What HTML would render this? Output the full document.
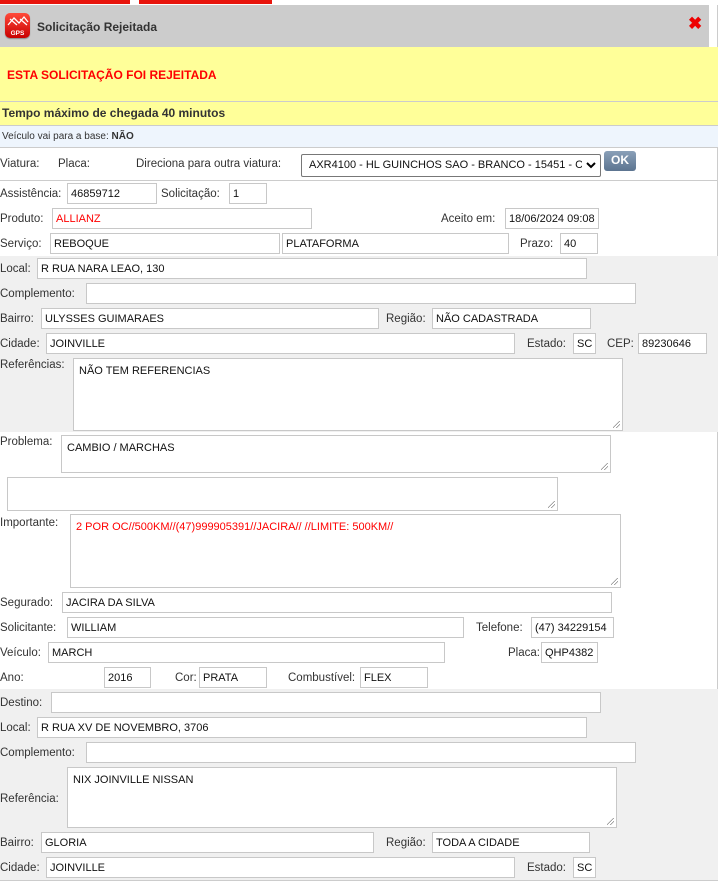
<!DOCTYPE html>
<html><head><meta charset="utf-8"><style>
*{box-sizing:border-box;margin:0;padding:0}
body{width:720px;height:891px;background:#fff;position:relative;overflow:hidden;font-family:"Liberation Sans",Arial,sans-serif;font-size:11.5px;color:#333}
.a{position:absolute}
.l{position:absolute;white-space:nowrap;line-height:14px;color:#333}
.i{position:absolute;height:21px;border:1px solid #c8c8c8;background:#fff;font-size:11px;line-height:20px;padding-left:3px;color:#111;white-space:nowrap;overflow:hidden}
.t{position:absolute;border:1px solid #c8c8c8;background:#fff;font-size:11px;padding:6px 0 0 5px;color:#111}
.t:after{content:"";position:absolute;right:2px;bottom:2px;width:7px;height:7px;background:linear-gradient(135deg,transparent 45%,#888 46%,#888 52%,transparent 53%,transparent 70%,#888 71%,#888 77%,transparent 78%)}
.g{position:absolute;left:0;width:718px;background:#f0f0f0}
</style></head><body>
<div class="a" style="left:0;top:0;width:130px;height:4px;background:#e8140c"></div>
<div class="a" style="left:139px;top:0;width:133px;height:4px;background:#e8140c"></div>
<div class="a" style="left:0;top:5px;width:718px;height:876px;border-right:1px solid #ccc;border-bottom:1px solid #ccc"></div>
<div class="a" style="left:0;top:5px;width:709px;height:42px;background:#ccc"></div>
<div class="a" style="left:5px;top:13px;width:25px;height:25px;border-radius:5px;background:linear-gradient(#ff4a3a,#c80000);box-shadow:0 1px 1px #888">
<svg width="25" height="25" viewBox="0 0 25 25"><path d="M3 12 L9 5 L14 10 L19 4 L23 9 M5 6 L12 12 M15 6 L22 12" stroke="#fff" stroke-width="1.3" fill="none"/><text x="12.5" y="22" font-size="6.5" fill="#fff" text-anchor="middle" font-family="Liberation Sans" font-weight="bold">GPS</text></svg></div>
<div class="l" style="left:37px;top:20px;font-weight:bold;font-size:12px;color:#333">Solicitação Rejeitada</div>
<div class="l" style="left:688px;top:17px;font-weight:bold;font-size:17px;color:#e00">✖</div>
<div class="a" style="left:0;top:47px;width:718px;height:55px;background:#ffff99;border-bottom:1px solid #ccc"></div>
<div class="l" style="left:7px;top:68px;font-weight:bold;font-size:12px;color:#f00">ESTA SOLICITAÇÃO FOI REJEITADA</div>
<div class="a" style="left:0;top:102px;width:718px;height:24px;background:#ffff99;border-bottom:1px solid #ccc"></div>
<div class="l" style="left:2px;top:106px;font-weight:bold;font-size:12px;color:#333">Tempo máximo de chegada 40 minutos</div>
<div class="a" style="left:0;top:126px;width:718px;height:22px;background:#eef5fd;border-bottom:1px solid #ccc"></div>
<div class="l" style="left:2px;top:130px;font-size:10px">Veículo vai para a base: <b>NÃO</b></div>
<div class="l" style="left:0;top:157px">Viatura:</div>
<div class="l" style="left:58px;top:157px">Placa:</div>
<div class="l" style="left:136px;top:157px">Direciona para outra viatura:</div>
<div class="a" style="left:301px;top:154px;width:300px;height:23px;border:1px solid #777;border-radius:2px;background:#fff"></div>
<div class="l" style="left:309px;top:158px;width:273px;overflow:hidden;font-size:11px;color:#111">AXR4100 - HL GUINCHOS SAO - BRANCO - 15451 - CAM</div>
<svg class="a" style="left:586px;top:161px" width="10" height="8" viewBox="0 0 10 8"><path d="M1 2 L5 6 L9 2" stroke="#000" stroke-width="2" fill="none"/></svg>
<div class="a" style="left:604px;top:151px;width:32px;height:20px;border-radius:3px;background:linear-gradient(#8aa0b8,#5c7490);color:#fff;font-weight:bold;font-size:12px;text-align:center;line-height:19px">OK</div>
<div class="a" style="left:0;top:180px;width:718px;height:1px;background:#ccc"></div>

<div class="l" style="left:0;top:187px">Assistência:</div><div class="i" style="left:67px;top:183px;width:90px">46859712</div>
<div class="l" style="left:161px;top:187px">Solicitação:</div><div class="i" style="left:229px;top:183px;width:38px">1</div>
<div class="l" style="left:0;top:212px">Produto:</div><div class="i" style="left:52px;top:208px;width:260px;color:#f00">ALLIANZ</div>
<div class="l" style="left:441px;top:212px">Aceito em:</div><div class="i" style="left:505px;top:208px;width:94px">18/06/2024 09:08</div>
<div class="l" style="left:0;top:237px">Serviço:</div><div class="i" style="left:50px;top:233px;width:230px">REBOQUE</div>
<div class="i" style="left:282px;top:233px;width:227px">PLATAFORMA</div>
<div class="l" style="left:520px;top:237px">Prazo:</div><div class="i" style="left:560px;top:233px;width:38px">40</div>

<div class="g" style="top:256px;height:176px"></div>
<div class="l" style="left:0;top:262px">Local:</div><div class="i" style="left:37px;top:258px;width:550px">R RUA NARA LEAO, 130</div>
<div class="l" style="left:0;top:287px">Complemento:</div><div class="i" style="left:86px;top:283px;width:550px"></div>
<div class="l" style="left:0;top:312px">Bairro:</div><div class="i" style="left:41px;top:308px;width:338px">ULYSSES GUIMARAES</div>
<div class="l" style="left:386px;top:312px">Região:</div><div class="i" style="left:432px;top:308px;width:159px">NÃO CADASTRADA</div>
<div class="l" style="left:0;top:337px">Cidade:</div><div class="i" style="left:46px;top:333px;width:469px">JOINVILLE</div>
<div class="l" style="left:527px;top:337px">Estado:</div><div class="i" style="left:573px;top:333px;width:23px">SC</div>
<div class="l" style="left:607px;top:337px">CEP:</div><div class="i" style="left:638px;top:333px;width:69px">89230646</div>
<div class="l" style="left:0;top:358px">Referências:</div><div class="t" style="left:73px;top:358px;width:550px;height:73px">NÃO TEM REFERENCIAS</div>

<div class="l" style="left:0;top:435px">Problema:</div><div class="t" style="left:61px;top:435px;width:550px;height:38px">CAMBIO / MARCHAS</div>
<div class="t" style="left:7px;top:477px;width:551px;height:34px"></div>
<div class="l" style="left:0;top:516px">Importante:</div><div class="t" style="left:70px;top:514px;width:551px;height:74px;color:#f00">2 POR OC//500KM//(47)999905391//JACIRA// //LIMITE: 500KM//</div>
<div class="l" style="left:0;top:596px">Segurado:</div><div class="i" style="left:62px;top:592px;width:550px">JACIRA DA SILVA</div>
<div class="l" style="left:0;top:621px">Solicitante:</div><div class="i" style="left:67px;top:617px;width:397px">WILLIAM</div>
<div class="l" style="left:476px;top:621px">Telefone:</div><div class="i" style="left:531px;top:617px;width:83px">(47) 34229154</div>
<div class="l" style="left:0;top:646px">Veículo:</div><div class="i" style="left:48px;top:642px;width:397px">MARCH</div>
<div class="l" style="left:508px;top:646px">Placa:</div><div class="i" style="left:541px;top:642px;width:57px">QHP4382</div>
<div class="l" style="left:0;top:671px">Ano:</div><div class="i" style="left:104px;top:667px;width:47px">2016</div>
<div class="l" style="left:175px;top:671px">Cor:</div><div class="i" style="left:199px;top:667px;width:68px">PRATA</div>
<div class="l" style="left:288px;top:671px">Combustível:</div><div class="i" style="left:360px;top:667px;width:68px">FLEX</div>

<div class="g" style="top:689px;height:191px"></div>
<div class="l" style="left:0;top:696px">Destino:</div><div class="i" style="left:51px;top:692px;width:550px"></div>
<div class="l" style="left:0;top:721px">Local:</div><div class="i" style="left:37px;top:717px;width:550px">R RUA XV DE NOVEMBRO, 3706</div>
<div class="l" style="left:0;top:746px">Complemento:</div><div class="i" style="left:86px;top:742px;width:550px"></div>
<div class="l" style="left:0;top:792px">Referência:</div><div class="t" style="left:67px;top:767px;width:550px;height:61px">NIX JOINVILLE NISSAN</div>
<div class="l" style="left:0;top:836px">Bairro:</div><div class="i" style="left:41px;top:832px;width:333px">GLORIA</div>
<div class="l" style="left:386px;top:836px">Região:</div><div class="i" style="left:432px;top:832px;width:158px">TODA A CIDADE</div>
<div class="l" style="left:0;top:861px">Cidade:</div><div class="i" style="left:46px;top:857px;width:469px">JOINVILLE</div>
<div class="l" style="left:527px;top:861px">Estado:</div><div class="i" style="left:573px;top:857px;width:23px">SC</div>
</body></html>
